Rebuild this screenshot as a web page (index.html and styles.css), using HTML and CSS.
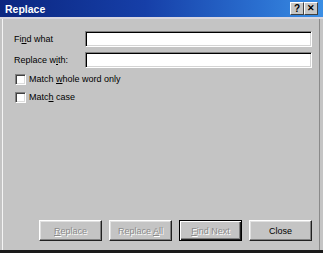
FILE: index.html
```html
<!DOCTYPE html>
<html>
<head>
<meta charset="utf-8">
<link rel="stylesheet" href="styles.css">
</head>
<body>
<div class="window">
  <div class="titlebar">
    <span class="title">Replace</span>
    <div class="tbtns">
      <span class="tbtn">?</span>
      <span class="tbtn x">&#x2715;</span>
    </div>
  </div>
  <div class="content">
    <div class="field">
      <span class="label">Fi<u>n</u>d what</span>
      <div class="input"></div>
    </div>
    <div class="field">
      <span class="label">Replace w<u>i</u>th:</span>
      <div class="input"></div>
    </div>
    <div class="check first"><span class="box"></span><span>Match <u>w</u>hole word only</span></div>
    <div class="check"><span class="box"></span><span>Matc<u>h</u> case</span></div>
    <div class="buttons">
      <div class="btn disabled"><span><u>R</u>eplace</span></div>
      <div class="btn disabled"><span>Replace <u>A</u>ll</span></div>
      <div class="btn disabled default"><span><u>F</u>ind Next</span></div>
      <div class="btn"><span>Close</span></div>
    </div>
  </div>
</div>
</body>
</html>
```
FILE: styles.css
```css
html, body { margin: 0; padding: 0; }
body {
  width: 323px;
  height: 253px;
  overflow: hidden;
  font-family: "Liberation Sans", Arial, sans-serif;
  font-size: 9px;
  color: #000;
}
.window {
  width: 323px;
  height: 253px;
  box-sizing: border-box;
  display: flex;
  flex-direction: column;
  background: #c4c4c4;
  border-bottom: 3px solid #1a1a1a;
  box-shadow: inset 2px 0 0 #c4c4c4, inset 3px 0 0 #f4f4f4, inset -3px 0 0 #c4c4c4, inset -4px 0 0 #8a8a8a;
}
.titlebar {
  height: 17px;
  flex: none;
  display: flex;
  align-items: center;
  justify-content: space-between;
  background: linear-gradient(to right, #0b2680 0%, #163fa8 45%, #2a6fd0 80%, #3a8ee4 100%);
  border-bottom: 2px solid #d8d6e0;
  padding: 0 5px 0 5px;
}
.title {
  color: #fff;
  font-weight: bold;
  font-size: 10.5px;
}
.tbtns { display: flex; }
.tbtn {
  width: 12px;
  height: 11px;
  background: #c6c6c6;
  border: 1px solid;
  border-color: #fff #404040 #404040 #fff;
  font-weight: bold;
  font-size: 10px;
  line-height: 11px;
  text-align: center;
  color: #000;
}
.tbtn.x { font-size: 9px; }
.content {
  flex: 1;
  display: flex;
  flex-direction: column;
  padding: 12px 11px 9px 14px;
}
.field {
  display: flex;
  align-items: center;
  height: 16px;
}
.field + .field { margin-top: 5px; }
.label { width: 71px; flex: none; }
.input {
  flex: 1;
  height: 16px;
  box-sizing: border-box;
  background: #fff;
  border: 1px solid;
  border-color: #808080 #fff #fff #808080;
  box-shadow: inset 1px 1px 0 #000, inset -1px -1px 0 #d4d4d4;
}
.check {
  display: flex;
  align-items: center;
  height: 12px;
  margin-top: 6px;
  padding-left: 1px;
}
.check.first { margin-top: 5px; }
.box {
  width: 11px;
  height: 11px;
  box-sizing: border-box;
  background: #fff;
  border: 1px solid;
  border-color: #808080 #fff #fff #808080;
  box-shadow: inset 1px 1px 0 #404040, inset -1px -1px 0 #dcdcdc;
  margin-right: 3px;
}
.buttons {
  margin-top: auto;
  display: flex;
  justify-content: flex-end;
  gap: 7px;
}
.btn {
  width: 63px;
  height: 21px;
  box-sizing: border-box;
  display: flex;
  align-items: center;
  justify-content: center;
  border: 1px solid;
  border-color: #fff #202020 #202020 #fff;
  box-shadow: inset -1px -1px 0 #808080, inset 1px 1px 0 #e0e0e0;
}
.btn.default {
  border-color: #000;
  box-shadow: inset 1px 1px 0 #fff, inset -1px -1px 0 #202020, inset -2px -2px 0 #808080;
}
.btn.disabled {
  color: #8a8a8a;
  text-shadow: 1px 1px 0 #fff;
}
```
